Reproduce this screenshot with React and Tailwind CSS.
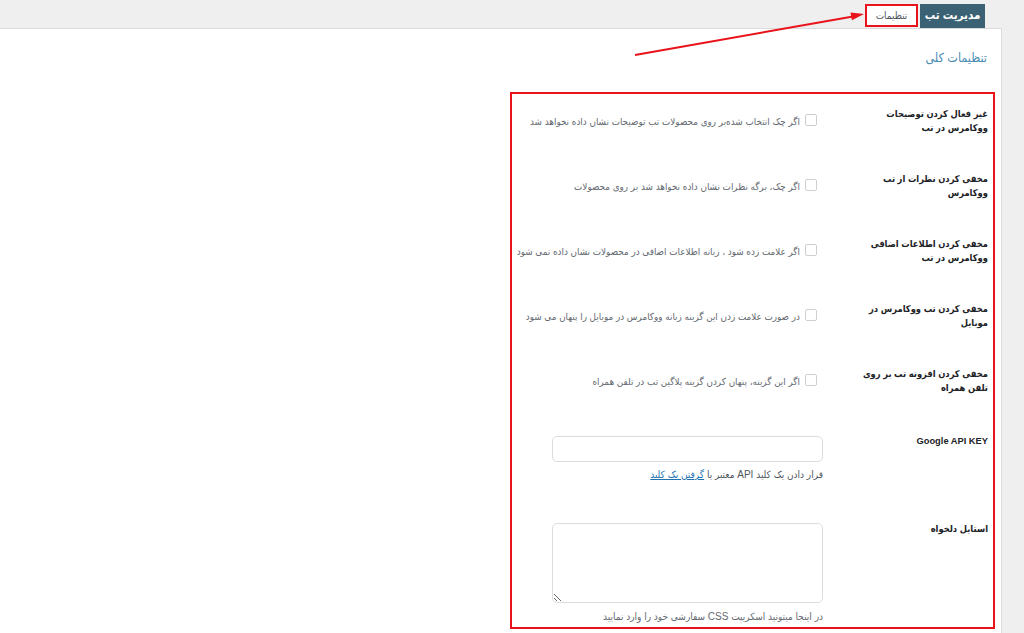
import React from 'react'

const FONT = "font-['Liberation_Sans','DejaVu_Sans_Condensed','DejaVu_Sans',sans-serif]"

const CHECK_ROWS = [
  { label: ['غیر فعال کردن توضیحات', 'ووکامرس در تب'], desc: 'اگر چک انتخاب شده‌بر روی محصولات تب توضیحات نشان داده نخواهد شد' },
  { label: ['مخفی کردن نظرات از تب', 'ووکامرس'], desc: 'اگر چک، برگه نظرات نشان داده نخواهد شد بر روی محصولات' },
  { label: ['مخفی کردن اطلاعات اضافی', 'ووکامرس در تب'], desc: 'اگر علامت زده شود ، زبانه اطلاعات اضافی در محصولات نشان داده نمی شود' },
  { label: ['مخفی کردن تب ووکامرس در', 'موبایل'], desc: 'در صورت علامت زدن این گزینه زبانه ووکامرس در موبایل را پنهان می شود' },
  { label: ['مخفی کردن افزونه تب بر روی', 'تلفن همراه'], desc: 'اگر این گزینه، پنهان کردن گزینه پلاگین تب در تلفن همراه' },
]

function CheckRow({ label, desc }) {
  return (
    <div className="flex h-[65px]">
      <div className="w-[150px] shrink-0 whitespace-nowrap pt-[13px] text-[9.3px] font-bold leading-[14px] text-[#1d2327]">
        {label[0]}
        <br />
        {label[1]}
      </div>
      <div className="flex flex-1 items-start pr-[15px] pt-[20px]">
        <span className="mr-[6px] ml-[5px] h-[12px] w-[12px] shrink-0 rounded-[2px] border border-[#cfcfcf] bg-white" />
        <span className="whitespace-nowrap pt-[1px] text-[9.8px] leading-[13px] text-[#646970]">{desc}</span>
      </div>
    </div>
  )
}

export default function App() {
  return (
    <div dir="rtl" className={`relative h-[633px] w-[1024px] overflow-hidden bg-[#efefef] ${FONT}`}>
      {/* tabs */}
      <div className="flex h-[28px] items-end gap-[2px] pr-[39px]">
        <div className="flex h-[24px] w-[65px] items-center justify-center bg-[#3a6274] text-[11.5px] font-bold text-white">
          مدیریت تب
        </div>
        <div className="mb-[1px] flex h-[23px] w-[53px] items-center justify-center border-2 border-[#e8131b] bg-white text-[10px] text-[#50575e]">
          تنظیمات
        </div>
      </div>

      <div className="flex h-[605px] pr-[22px]">
        <div className="flex-1 border-t border-r border-[#dcdcde] bg-white">
          <h2 className="pr-[14px] pt-[19px] text-[12.5px] leading-[20px] text-[#4a8bb3]">تنظیمات کلی</h2>

          <div className="mr-[6px] mt-[24px] h-[537px] w-[485px] border-2 border-[#e8131b] pr-[5px]">
            {CHECK_ROWS.map((r, i) => (
              <CheckRow key={i} label={r.label} desc={r.desc} />
            ))}

            <div className="flex h-[88px]">
              <div className="w-[150px] shrink-0 pt-[15px] text-[9.3px] font-bold leading-[14px] text-[#1d2327]">
                Google API KEY
              </div>
              <div className="flex-1 pr-[15px]">
                <input
                  type="text"
                  className="mt-[17px] block h-[26px] w-[271px] rounded-[5px] border border-[#dcdcde] bg-white px-2 text-[12px] outline-none"
                />
                <p className="mt-[6px] whitespace-nowrap text-[10px] leading-[14px] text-[#50575e]">
                  قرار دادن یک کلید API معتبر یا <a className="text-[#2271b1] underline">گرفتن یک کلید</a>
                </p>
              </div>
            </div>

            <div className="flex">
              <div className="w-[150px] shrink-0 pt-[15px] text-[9.3px] font-bold leading-[14px] text-[#1d2327]">
                استایل دلخواه
              </div>
              <div className="flex-1 pr-[15px]">
                <textarea className="mt-[16px] block h-[80px] w-[271px] rounded-[5px] border border-[#dcdcde] bg-white text-[12px] outline-none" />
                <p className="mt-[7px] whitespace-nowrap text-[10px] leading-[14px] text-[#646970]">
                  در اینجا میتونید اسکریپت CSS سفارشی خود را وارد نمایید
                </p>
              </div>
            </div>
          </div>
        </div>
      </div>

      {/* annotation arrow */}
      <svg className="pointer-events-none absolute inset-0" width="1024" height="633">
        <line x1="635" y1="55" x2="853" y2="16.5" stroke="#e8131b" strokeWidth="2" />
        <polygon points="864,14 851.9,20.2 850.5,12.4" fill="#e8131b" />
      </svg>
    </div>
  )
}
